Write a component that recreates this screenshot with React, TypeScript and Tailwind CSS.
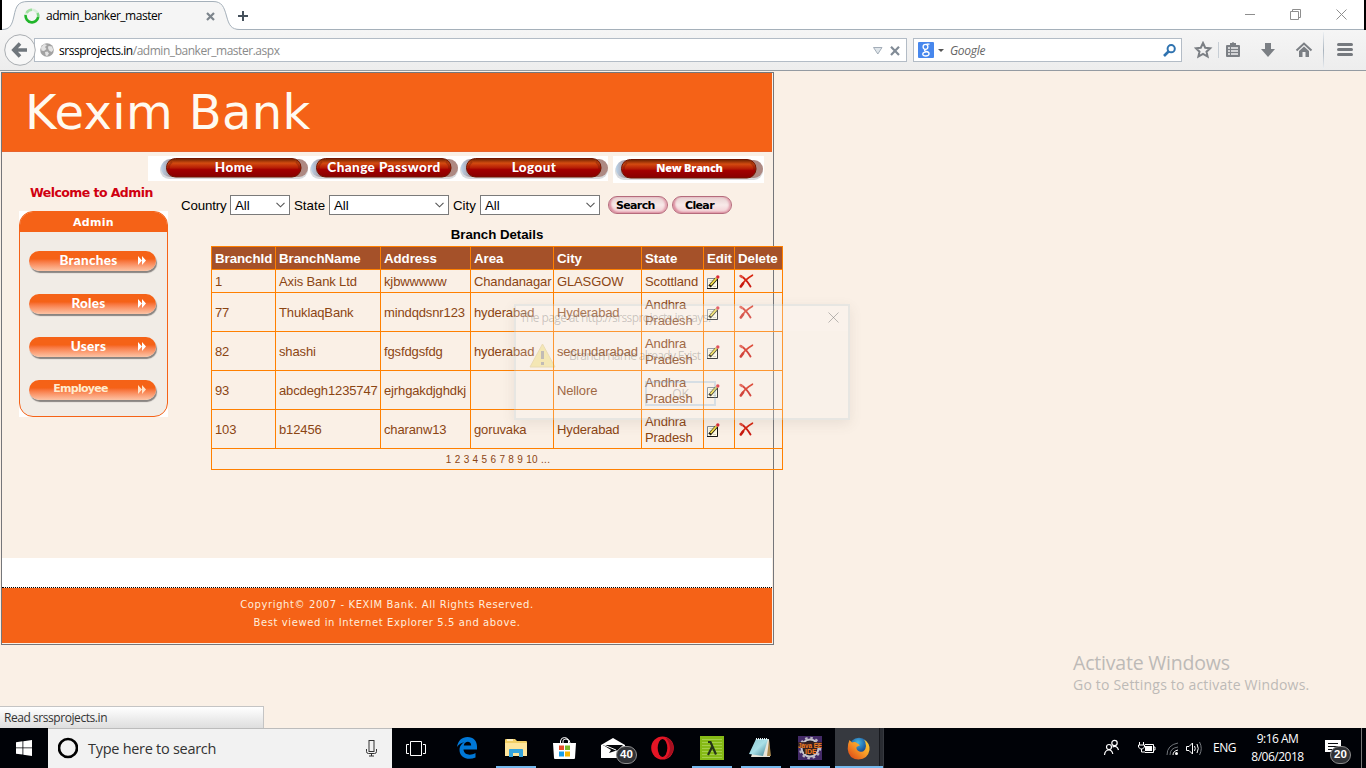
import React from "react";
import { FaEdge } from "react-icons/fa";

const NAV = ["Home", "Change Password", "Logout"];
const COLUMNS = ["BranchId", "BranchName", "Address", "Area", "City", "State", "Edit", "Delete"];
const ROWS = [
  ["1", "Axis Bank Ltd", "kjbwwwww", "Chandanagar", "GLASGOW", "Scottland"],
  ["77", "ThuklaqBank", "mindqdsnr123", "hyderabad", "Hyderabad", "Andhra Pradesh"],
  ["82", "shashi", "fgsfdgsfdg", "hyderabad", "secundarabad", "Andhra Pradesh"],
  ["93", "abcdegh1235747", "ejrhgakdjghdkj", "", "Nellore", "Andhra Pradesh"],
  ["103", "b12456", "charanw13", "goruvaka", "Hyderabad", "Andhra Pradesh"],
];
const UI = "font-['Open_Sans','Noto_Sans',sans-serif]";
const ARIAL = "font-['Liberation_Sans',Arial,sans-serif]";
const VERDANA = "font-['DejaVu_Sans',Verdana,sans-serif]";

function TabStrip() {
  return (
    <div className="relative flex h-[30px] bg-white">
      <div className="h-full w-[2px] bg-black" />
      <div className="flex h-full grow border-b border-[#a5b0ba]">
        <div className="relative flex h-[30px] w-[238px] items-center">
          <svg className="absolute top-0 left-0" width="238" height="30" viewBox="0 0 238 30">
            <path d="M0 29.5C8 29.5 10 25 12 16C14 6 16 1.500 26 1.500H211C220 1.500 222 7 224.500 16C227 25 229 29.500 238 29.500V30H0Z" fill="#f5f5f5" />
            <path d="M0 29.5C8 29.5 10 25 12 16C14 6 16 1.500 26 1.500H211C220 1.500 222 7 224.500 16C227 25 229 29.500 238 29.500" fill="none" stroke="#a5b0ba" />
          </svg>
          <svg className="relative ml-[22px] mt-[2px]" width="16" height="16" viewBox="0 0 16 16" fill="none" strokeWidth="2.600">
            <circle cx="8" cy="8" r="6.300" stroke="#d9efd9" />
            <path d="M1.700 7A6.300 6.300 0 0 0 14.200 9" stroke="#21b52a" />
            <path d="M2.600 4.800A6.300 6.300 0 0 1 8 1.700" stroke="#9fdf9f" />
            <path d="M14.200 9A6.300 6.300 0 0 0 13.500 5" stroke="#7fd684" />
          </svg>
          <span className="relative ml-[6px] mt-[2px] w-[150px] text-[12px] leading-4 tracking-[-0.480px] whitespace-nowrap text-black">admin_banker_master</span>
          <svg className="relative ml-[10px] mt-[2px]" width="9" height="9" viewBox="0 0 9 9" stroke="#7d858c" strokeWidth="2.200"><path d="M1 1L8 8M8 1L1 8" /></svg>
        </div>
        <svg className="-ml-[2px] mt-[11px]" width="10" height="10" viewBox="0 0 10 10" stroke="#46515c" strokeWidth="2"><path d="M5 0V10M0 5H10" /></svg>
        <div className="ml-auto flex items-start pr-[17px]">
          <svg className="mt-[9px]" width="102" height="11" viewBox="0 0 102 11" fill="none" stroke="#8e8e8e">
            <path d="M0 5.500H10M45.500 2.500H53.500V10.500H45.500ZM47.500 2.500V.500H55.500V8.500H53.500M91.500 .5L101.500 10.500M101.500 .5L91.500 10.500" />
          </svg>
        </div>
      </div>
      <div className="h-full w-[2px] bg-black" />
    </div>
  );
}

function Toolbar() {
  return (
    <div className="flex h-[41px] items-start border-b border-[#949ba2] bg-linear-to-b from-[#f5f5f5] to-[#ededed] pt-[8px]">
      <div className="relative ml-[34px] flex h-[24px] w-[873px] items-center border border-[#b3bcc6] bg-white">
        <svg className="absolute -top-[5px] -left-[31px]" width="32" height="32" viewBox="0 0 32 32">
          <circle cx="16" cy="16" r="15.300" fill="#f7f7f7" stroke="#a9adb1" />
          <path d="M10.500 16H23M16 9.500L9.800 16L16 22.500" fill="none" stroke="#6f767c" strokeWidth="3.600" />
        </svg>
        <svg className="ml-[5px]" width="14" height="14" viewBox="0 0 14 14">
          <circle cx="7" cy="7" r="6.800" fill="#a2a2a2" />
          <path d="M1 4.500L4 1L7 2L5 4L6.500 6L4 8L1.500 7.500ZM8.500 3L12 3.500L13.300 7L11.500 9L9 7.500L8 5ZM5 9L7.500 8.500L9 10.500L7 13.300L5.500 12Z" fill="#e3e3e3" />
        </svg>
        <span className="mt-[2px] ml-[5px] text-[12px] leading-4 tracking-[-0.460px] text-[#8a8a8a]"><span className="text-black">srssprojects.in</span>/admin_banker_master.aspx</span>
        <svg className="mt-px mr-[6px] ml-auto" width="27" height="10" viewBox="0 0 27 10">
          <path d="M.5 1.500H9L4.800 8Z" fill="#dfe5ea" stroke="#a3adb8" />
          <path d="M18 .8L26 9M26 .8L18 9" stroke="#818b96" strokeWidth="2.200" />
        </svg>
      </div>
      <div className="ml-[6px] flex h-[24px] w-[269px] items-center border border-[#b3bcc6] bg-white">
        <svg className="ml-[4px]" width="16" height="16" viewBox="0 0 16 16">
          <rect width="16" height="16" rx="1" fill="#4787ed" />
          <g fill="none" stroke="white" strokeWidth="1.300"><ellipse cx="7.500" cy="4.800" rx="2.400" ry="2.500" /><path d="M8.500 2.200H11.500M7.500 7.300C5.500 8.500 7 9 8.500 9.500C12.500 10.500 11.500 14 7.800 14C3.500 14 3.700 10 8.500 9.800" /></g>
        </svg>
        <svg className="ml-[4px]" width="6" height="3"><path d="M0 0H6L3 3Z" fill="#555" /></svg>
        <span className="mt-[2px] ml-[6px] text-[12px] leading-4 tracking-[-0.300px] text-[#666] italic">Google</span>
        <svg className="ml-auto mr-[5px]" width="13" height="13" viewBox="0 0 13 13" fill="none" stroke="#2f73b0"><circle cx="8.200" cy="4.700" r="3.600" strokeWidth="2" /><path d="M5.500 7.500L1 12" strokeWidth="2.600" /></svg>
      </div>
      <svg className="ml-[12px] mt-[3px]" width="172" height="18" viewBox="0 0 172 18">
        <path d="M9 2L11.200 6.700L16.200 7.200L12.500 10.700L13.600 15.600L9 13L4.400 15.600L5.500 10.700L1.800 7.200L6.800 6.700Z" fill="none" stroke="#7b7f84" strokeWidth="2" />
        <path d="M24.500 1V17" stroke="#c7ced5" />
        <path d="M32 5Q32 4 33 4H36V2H38Q39 0 40 2H42V4H45Q46 4 46 5V15Q46 16 45 16H33Q32 16 32 15Z" fill="#7b7f84" />
        <path d="M34 7H36M37 7H44M34 10H36M37 10H44M34 13H36M37 13H44" stroke="#f1f1f1" strokeWidth="1.500" />
        <path d="M71 2H77V8H81L74 16L67 8H71Z" fill="#7b7f84" />
        <path d="M102.500 9.500L110 2.500L117.500 9.500" stroke="#7b7f84" strokeWidth="2" fill="none" />
        <path d="M105 10L110 5.500L115 10V16H111.500V11H108.500V16H105Z" fill="#7b7f84" />
        <path d="M144.500 3.500H157.500M144.500 8.500H157.500M144.500 13.500H157.500" stroke="#75797e" strokeWidth="3" strokeLinecap="round" />
      </svg>
      <div className="-ml-[43px] -mt-[6px] h-[37px] w-px bg-linear-to-b from-[#edf0f3] via-[#a9b4be] to-[#edf0f3]" />
    </div>
  );
}

function NavButton({ label, id, narrow = false }: { label: string; id: string; narrow?: boolean }) {
  return (
    <div className="relative flex h-[25px] w-[150px] items-center justify-center">
      <svg className="absolute top-0 left-px" width="150" height="25" viewBox="0 0 150 25">
        <defs>
          <linearGradient id={`nav-${id}`} x1="0" y1="0" x2="0" y2="1">
            <stop offset="0" stopColor="#692000" /><stop offset=".25" stopColor="#d34b10" /><stop offset=".5" stopColor="#b61d05" /><stop offset=".6" stopColor="#a20000" /><stop offset="1" stopColor="#870000" />
          </linearGradient>
          <linearGradient id={`sh-${id}`} x1="0" y1="0" x2="1" y2="0">
            <stop offset="0" stopColor="#b9d3ea" /><stop offset=".06" stopColor="#a99aa0" /><stop offset="1" stopColor="#ae8982" />
          </linearGradient>
        </defs>
        <rect x="1" y="5" width="148" height="18" rx="9" fill="#d8dadd" />
        <rect x="2" y="3" width="147" height="18" rx="9" fill={`url(#sh-${id})`} />
        <rect x="7.500" y="2.500" width="134.500" height="18.500" rx="9" fill={`url(#nav-${id})`} stroke="#711500" />
        <path d="M13 6Q9 9 10 13M137 6Q141 9 140 13" fill="none" stroke="#5c1205" strokeOpacity=".3" strokeWidth="2" />
      </svg>
      <span className={narrow ? "relative mt-[-3px] ml-[3px] text-[11px] leading-4 font-extrabold tracking-[-0.250px] text-white font-['Open_Sans',sans-serif]" : "relative -mt-[3px] ml-[2px] text-[13.500px] leading-4 font-black tracking-[0.420px] text-white font-['Lato',sans-serif]"}>{label}</span>
    </div>
  );
}

function SideButton({ label, alt = false }: { label: string; alt?: boolean }) {
  return (
    <div className="relative flex h-[20px] w-[127px] items-center rounded-full bg-linear-to-b from-[#f56217] from-40% to-[#fbc3a5] shadow-[1px_2px_1px_#898481]">
      <span className={alt ? "w-[103px] text-center text-[11px] font-bold leading-4 text-[#ffecd0] tracking-[-0.750px] font-['DejaVu_Sans',sans-serif] -mt-[3px]" : "w-[119px] text-center text-[13.500px] font-black leading-4 text-white tracking-[0.300px] font-['Lato',sans-serif] -mt-[2px]"}>{label}</span>
      <svg className="absolute top-[5px] left-[109px]" width="8" height="9" viewBox="0 0 8 9" fill={alt ? "#ffe2c8" : "white"}><path d="M0 0L4 4.500L0 9ZM4 0L8 4.500L4 9Z" /></svg>
    </div>
  );
}

function Sidebar() {
  return (
    <aside className="w-[149px] bg-white">
      <div className="h-[206px] overflow-hidden rounded-[14px] border border-[#f56217] bg-[#f1ece6]">
        <div className={`${VERDANA} h-[20px] bg-[#f56217] text-center text-[11px] leading-[21px] font-bold tracking-[0.300px] text-white`}>Admin</div>
        <div className="flex flex-col gap-[23px] pt-[19px] pl-[9px]">
          <SideButton label="Branches" />
          <SideButton label="Roles" />
          <SideButton label="Users" />
          <SideButton label="Employee" alt />
        </div>
      </div>
    </aside>
  );
}

function Select({ wide = false }: { wide?: boolean }) {
  return (
    <div className={`${wide ? "w-[120px]" : "w-[60px]"} flex h-[20px] items-center justify-between border border-[#7a7a7a] bg-white pr-[4px] pl-[4px] text-[13.300px]`}>
      <span className="pt-px leading-4">All</span>
      <svg width="9" height="6" viewBox="0 0 9 6" fill="none" stroke="#555" strokeWidth="1.100"><path d="M.5 .8L4.500 4.800L8.500 .8" /></svg>
    </div>
  );
}

function PinkButton({ label, pad }: { label: string; pad: string }) {
  return (
    <div className={`flex h-[18px] w-[60px] items-center rounded-full border border-[#b56b7c] bg-linear-to-b from-[#e6d0d0] via-[#f8eae9] to-[#f2ccd2] shadow-[inset_2px_-1px_2px_#dc8fa0,inset_-2px_0_2px_#e3a4b1] ${pad} text-[11px] leading-4 font-bold text-black tracking-[-0.650px] font-['DejaVu_Sans',sans-serif]`}><span className="pt-px">{label}</span></div>
  );
}

function EditIcon() {
  return (
    <svg width="13" height="14" viewBox="0 0 13 14">
      <path d="M.5 3.500H10.500V13.500H.5Z" fill="#fffbe6" stroke="#7d8793" />
      <path d="M10.500 4V13.500H0" fill="none" stroke="#161616" />
      <path d="M2.500 5.500H6M2.500 7.500H5M6 11.500H9" stroke="#cfcab8" strokeWidth=".8" />
      <path d="M2.500 11.500L9.500 3.500" stroke="#1f1a0c" strokeWidth="3.200" />
      <path d="M3.600 10L9.600 3.100" stroke="#f4e04c" strokeWidth="1.900" />
      <circle cx="10.800" cy="2" r="1.700" fill="#dc2a35" />
    </svg>
  );
}

function DeleteIcon() {
  return (
    <svg width="15" height="14" viewBox="0 0 15 14" fill="none" strokeLinecap="round">
      <path d="M2 2Q7 5 11.500 12.500" stroke="#cb1b12" strokeWidth="1.900" />
      <path d="M1.800 12.500Q5 6 13.500 1.200" stroke="#d8260f" strokeWidth="1.600" />
      <path d="M1.800 12.500L4 9.500" stroke="#c8190f" strokeWidth="2.600" />
      <path d="M1.500 2L3 3" stroke="#e34c39" strokeWidth="2.400" />
    </svg>
  );
}

function BranchTable() {
  return (
    <div className="w-[572px]">
      <div className="h-[20px] text-center text-[13.300px] leading-[17px] font-bold tracking-[-0.040px] text-black">Branch Details</div>
      <div className="grid grid-cols-[64px_105px_90px_83px_88px_62px_31px_48px] border-t border-l border-[#ff8000] leading-4 text-[#8b4513]">
        {COLUMNS.map((c) => (
          <div key={c} className="flex h-[23px] items-center border-r border-b border-[#ff8000] bg-[#a55129] pt-px pl-[3px] text-[13.300px] font-bold tracking-[-0.050px] whitespace-nowrap text-white">{c}</div>
        ))}
        {ROWS.map((row, i) => (
          <React.Fragment key={row[0]}>
            {row.map((v, j) => (
              <div key={j} className={`${i === 0 ? "h-[23px]" : "h-[39px]"} flex items-center border-r border-b border-[#ff8000] pt-[2px] pl-[3px] text-[13px] tracking-[-0.130px]`}>{v}</div>
            ))}
            <div className="flex items-center border-r border-b border-[#ff8000] pt-px pl-[3px]"><EditIcon /></div>
            <div className="flex items-center border-r border-b border-[#ff8000] pl-[4px] pb-px"><DeleteIcon /></div>
          </React.Fragment>
        ))}
        <div className="col-span-8 h-[21px] border-r border-b border-[#ff8000] pl-[2px] text-center text-[10px] leading-[21px] tracking-[0.300px]">1 2 3 4 5 6 7 8 9 10 ...</div>
      </div>
    </div>
  );
}

function AlertDialog() {
  return (
    <div className={`${UI} absolute top-[233px] left-[514px] h-[116px] w-[336px] border-2 border-[#7fa9bb]/15 bg-[#f5f3f5]/20 text-[12px] leading-4 text-[#555]/30 shadow-[0_4px_12px_rgba(90,80,70,0.10)]`}>
      <div className="flex h-[25px] items-center justify-between bg-white/10 pr-[9px] pl-[4px]">
        <span className="-mt-[2px] tracking-[-0.600px]">The page at http://srssprojects.in says:</span>
        <svg className="-mt-[3px]" width="11" height="11" viewBox="0 0 11 11" stroke="#777" strokeOpacity=".5"><path d="M.5 .5L10.500 10.500M10.500 .5L.5 10.500" /></svg>
      </div>
      <div className="flex items-center pt-[11px] pl-[13px]">
        <svg width="27" height="27" viewBox="0 0 27 27" opacity=".28"><path d="M13.500 2L26 25H1Z" fill="#ead02d" stroke="#c6a52d" strokeLinejoin="round" /><path d="M13.500 9V17M13.500 20V23" stroke="#333" strokeWidth="3" /></svg>
        <span className="ml-[13px] mt-px tracking-[-0.680px]">Branch name already Exist</span>
      </div>
      <div className="mt-[12px] ml-[129px] flex h-[25px] w-[71px] items-center justify-center border-2 border-[#70a7d8]/25">OK</div>
    </div>
  );
}

function Site() {
  return (
    <div className={`${ARIAL} mt-[1px] ml-[1px] flex h-[573px] w-[773px] flex-col border border-[#75767a] pr-px pb-px`}>
      <header className="h-[79px] border-b border-[#e8632d] bg-[#f56217] pt-[11px] pl-[23px]">
        <h1 className={`${VERDANA} text-[48px] leading-[56px] tracking-[0.350px] whitespace-nowrap text-[#fffaf0]`}>Kexim Bank</h1>
      </header>
      <div className="flex h-[406px]">
        <div className="w-[146px] pt-[33px] pl-[17px]">
          <div className={`${VERDANA} -mr-2 ml-[11px] h-[26px] text-[12.500px] leading-4 font-bold tracking-[-0.560px] whitespace-nowrap text-[#d00010]`}>Welcome to Admin</div>
          <Sidebar />
        </div>
        <div className="flex w-[620px] flex-col pt-[4px]">
          <div className="flex h-[27px] items-start">
            <div className="flex h-[25px] w-[460px] bg-white pl-[10px]">
              {NAV.map((n) => <NavButton key={n} label={n} id={n[0]} />)}
            </div>
            <div className="ml-[5px] flex h-[27px] w-[151px] bg-white pt-[1px]"><NavButton label="New Branch" id="N" narrow /></div>
          </div>
          <div className="mt-[12px] flex h-[20px] items-center pl-[33px] text-[13.300px] leading-4 text-black">
            <span className="w-[49px] pt-px tracking-[-0.150px]">Country</span><Select />
            <span className="w-[39px] pt-px pl-[4px]">State</span><Select wide />
            <span className="w-[31px] pt-px pl-[4px]">City</span><Select wide />
            <span className="w-[8px]" />
            <PinkButton label="Search" pad="pl-[7px]" /><span className="w-[4px]" /><PinkButton label="Clear" pad="pl-[12px]" />
          </div>
          <div className="mt-[11px] pl-[63px]"><BranchTable /></div>
        </div>
      </div>
      <div className="h-[29px] bg-white" />
      <footer className={`${VERDANA} flex grow flex-col items-center border-t border-dotted border-black bg-[#f56217] bg-clip-padding pt-[8px] text-[10px] leading-[18px] tracking-[0.600px] text-[#ffeedd]`}>
        <p>Copyright© 2007 - KEXIM Bank. All Rights Reserved.</p>
        <p>Best viewed in Internet Explorer 5.5 and above.</p>
      </footer>
    </div>
  );
}

function Badge({ children }: { children: React.ReactNode }) {
  return <span className={`${ARIAL} absolute flex h-[18px] w-[21px] items-center justify-center rounded-full border border-[#8d8d8d] bg-[#303236] text-[11.500px] leading-none font-bold text-white`}>{children}</span>;
}

function TaskItem({ children, running = false, active = false }: { children: React.ReactNode; running?: boolean; active?: boolean }) {
  return (
    <div className={`relative flex h-full w-[49px] items-center justify-center ${active ? "bg-[#36393f]" : ""}`}>
      {children}
      {running && <div className={`absolute bottom-0 h-[2px] bg-[#76b9ed] ${active ? "left-0 w-[48px]" : "left-[4px] w-[40px]"}`} />}
    </div>
  );
}

function Taskbar() {
  return (
    <div className={`${UI} flex h-[40px] bg-[#000207] text-white`}>
      <div className="flex w-[48px] items-center justify-center">
        <svg width="16" height="16" viewBox="0 0 16 16" fill="white"><path d="M0 2.200L6.500 1.300V7.500H0ZM7.300 1.200L16 0V7.500H7.300ZM0 8.300H6.500V14.500L0 13.700ZM7.300 8.300H16V16L7.300 14.700Z" /></svg>
      </div>
      <div className="flex w-[344px] items-center border-t border-[#bcbcbc] bg-[#f2f2f2] pl-[10px]">
        <svg className="-mt-px" width="20" height="22" viewBox="0 0 20 22"><circle cx="10" cy="11" r="9" fill="none" stroke="#000" strokeWidth="2.700" /></svg>
        <span className="ml-[10px] text-[14.500px] leading-5 tracking-[-0.280px] text-[#333]">Type here to search</span>
        <svg className="mr-[15px] ml-auto" width="11" height="17" viewBox="0 0 11 17" fill="none" stroke="#333"><rect x="3" y=".5" width="5" height="11" /><path d="M.5 9V11.500Q.5 13.500 2.500 13.500H8.500Q10.500 13.500 10.500 11.500V9M5.500 13.500V16M3 16H8" /></svg>
      </div>
      <div className="flex w-[51px] items-center pl-[14px]">
        <svg width="20" height="15" viewBox="0 0 20 15" fill="none" stroke="white"><path d="M4.500 .5H15.500V14.500H4.500ZM3 3.500H.5V12.500H3M17 3.500H19.500V12.500H17" /></svg>
      </div>
      <TaskItem>
        <svg className="-ml-px" width="20" height="22" viewBox="0 0 20 22"><path d="M0 10C1 3.500 5 0 10.500 0C16.500 0 20 4 20 9.500V12.500H6.500C7 18 13.500 19 18.500 16V20.500C11 24 2.500 20.500 2.500 13C2.500 9 5 6 8 5C4.500 5.500 1.500 7.500 0 10ZM6.800 8.500H14.200C14.200 3.500 7.500 3.800 6.800 8.500Z" fill="#0078d7" /></svg>
      </TaskItem>
      <TaskItem running>
        <svg className="-ml-[2px]" width="22" height="20" viewBox="0 0 22 20"><path d="M0 2Q0 1 1 1H10L12 3H21Q22 3 22 4V18H0Z" fill="#f2cf66" /><path d="M0 5H22V18H0Z" fill="#ffe69c" /><path d="M2 2H8" stroke="#fff7da" strokeWidth="1.500" /><path d="M4 19V11.500Q4 11 5 11H17Q18 11 18 11.500V19H14V15H8V19Z" fill="#35a4dc" /></svg>
      </TaskItem>
      <TaskItem>
        <svg className="-mt-[1px] -ml-[2px]" width="23" height="24" viewBox="0 0 23 24"><path d="M0 7H23L22 22Q22 23 21 23H2Q1 23 1 22Z" fill="white" /><path d="M7.500 7V5Q8 1.500 11.500 1.500Q15 1.500 15.500 5V7M10 7V5Q10 3 13 3Q17 3 17 7" fill="none" stroke="white" /><path d="M6 9.500H11V14H6Z" fill="#e74c29" /><path d="M12 9.500H17V14H12Z" fill="#7bb829" /><path d="M6 15.500H11V20.500H6Z" fill="#1a9ee8" /><path d="M12 15.500H17V20.500H12Z" fill="#f8b500" /></svg>
      </TaskItem>
      <TaskItem>
        <svg className="-ml-[3px]" width="24" height="20" viewBox="0 0 24 20"><path d="M0 7L12 0L24 7V20H0Z" fill="white" /><path d="M2 7H22L17 12L8 15L10 12Z" fill="#05070b" /><path d="M3 7L15 12" stroke="white" /></svg>
        <div className="absolute top-[18px] left-[26px]"><Badge>40</Badge></div>
      </TaskItem>
      <TaskItem>
        <svg className="-ml-[2px]" width="23" height="24" viewBox="0 0 23 24"><ellipse cx="11.500" cy="12" rx="11.300" ry="11.500" fill="#e51525" /><path d="M14 1Q22.500 4 22.500 12Q22 20 14 23Q19 18 19 12Q18 5 14 1Z" fill="#a61020" /><ellipse cx="11.500" cy="12" rx="4.800" ry="9" fill="#020306" /></svg>
      </TaskItem>
      <TaskItem running>
        <svg className="-ml-px" width="24" height="24" viewBox="0 0 24 24"><rect width="24" height="24" fill="#86ba16" /><path d="M2 3.500H22M2 6.500H22M2 9.500H22M2 12.500H22M2 15.500H22M2 18.500H22M2 21.500H22" stroke="#a4cf49" /><path d="M8 6H10.500L16 18.500M12 11L8 19" stroke="#26341a" strokeWidth="2.200" fill="none" /></svg>
      </TaskItem>
      <TaskItem running>
        <svg className="-ml-[3px]" width="24" height="22" viewBox="0 0 24 22"><defs><linearGradient id="note" x1="0" x2="1" y2="1"><stop stopColor="#8fc9d3" /><stop offset=".5" stopColor="#a9e0e8" /><stop offset="1" stopColor="#407e90" /></linearGradient></defs><path d="M9 2H21L22 20H3Z" fill="#e9e5da" /><path d="M21 3L23 19H19Z" fill="#a9894f" /><path d="M8 2H20L15 19L1 17Z" fill="url(#note)" /><path d="M8 2H20" stroke="#e7eef0" strokeWidth="2" strokeDasharray="1 1" /></svg>
      </TaskItem>
      <TaskItem running>
        <svg className="-ml-[2px]" width="24" height="24" viewBox="0 0 24 24"><rect width="24" height="24" fill="#432a67" /><circle cx="12" cy="12" r="8.500" fill="#1e1a28" stroke="#c8c6cd" strokeWidth="2" /><circle cx="12" cy="12" r="10" fill="none" stroke="#bbb7c4" strokeWidth="2.500" strokeDasharray="2.500 2.736" /><path d="M0 6H24V12H18V18H6V12H0Z" fill="#38201f" fillOpacity=".85" /><text x="0" y="11.500" fontFamily="Liberation Sans" fontWeight="bold" fontSize="7" fill="#f47e23" textLength="24" lengthAdjust="spacingAndGlyphs">Java EE</text><text x="7" y="17.500" fontFamily="Liberation Sans" fontWeight="bold" fontSize="7" fill="#f47e23">IDE</text></svg>
      </TaskItem>
      <TaskItem running active>
        <svg className="-ml-[2px]" width="23" height="23" viewBox="0 0 23 23"><defs><radialGradient id="globe" cx=".45" cy=".25"><stop stopColor="#47b7e4" /><stop offset="1" stopColor="#154b94" /></radialGradient><linearGradient id="fox" x1="1" x2="0" y2="1"><stop stopColor="#ffd936" /><stop offset=".5" stopColor="#f59527" /><stop offset="1" stopColor="#d93a13" /></linearGradient></defs><circle cx="12" cy="10.500" r="9.800" fill="url(#globe)" /><path d="M2.500 3L5 5.500Q8 4.500 10 6L13 8.200L9.500 10Q9 13 12.500 14.500Q18 16 19 9Q19 5 17 2.500Q23 6 22.500 13Q21 22 11.500 22.500Q1.500 22 .7 12Q.5 7 2.500 3Z" fill="url(#fox)" /></svg>
        <div className="absolute top-0 right-px h-full w-[4px] border-l border-[#17191e] bg-[#292c32]" />
      </TaskItem>
      <div className="ml-auto flex h-full items-center">
        <svg width="100" height="20" viewBox="0 0 100 20" fill="none" stroke="white">
          <circle cx="6" cy="9" r="2.500" strokeWidth="1.200" /><path d="M1.500 17Q2 12 6 12Q9 12 9.800 16" strokeWidth="1.200" /><circle cx="11.500" cy="5" r="2.700" strokeWidth="1.200" /><path d="M9.500 9Q14 7 15.500 12" strokeWidth="1.200" />
          <path d="M36.500 4V7M40.500 4V7M35.500 7H41.500V9L39.500 11H37.500L35.500 9ZM38.500 11V14H42M42 6.500H50.500V14.500H42M50.500 9H52V12H50.500" /><path d="M42 8H49V13H42Z" fill="white" stroke="none" />
          <path d="M64 17Q64 7 75 5M67 17Q67 10 75 9" stroke="#71757a" /><path d="M70 17Q70 13 75 12" /><circle cx="73.500" cy="15.500" r="1.500" fill="white" stroke="none" />
          <path d="M83.500 8.500H86L89.500 5V16L86 12.500H83.500Z" /><path d="M91.500 8Q93 10.500 91.500 13M94 6Q96.500 10.500 94 15" /><path d="M96.500 4Q100 10.500 96.500 17" stroke="#74787d" />
        </svg>
        <span className="ml-[10px] w-[24px] text-[12px] leading-4 tracking-[-0.500px]">ENG</span>
        <div className="ml-[12px] w-[57px] text-center text-[12px] leading-[18px] tracking-[-0.500px] whitespace-nowrap"><div>9:16 AM</div><div>8/06/2018</div></div>
        <div className="relative ml-[19px] h-[40px] w-[36px]">
          <svg className="absolute top-[12px] left-0" width="16" height="15" viewBox="0 0 16 15"><path d="M0 0H16V12H9L6 15V12H0Z" fill="white" /><path d="M3 3.500H13M3 6.500H13M3 9.500H10" stroke="#090b0f" /></svg>
          <div className="absolute top-[18px] left-[5px]"><Badge>20</Badge></div>
        </div>
        <div className="mr-[4px] h-full w-px bg-[#777]" />
      </div>
    </div>
  );
}

export default function App() {
  return (
    <div className={`${UI} flex h-[768px] w-[1366px] flex-col overflow-hidden bg-[#faf0e6]`}>
      <TabStrip />
      <Toolbar />
      <main className="relative h-[657px] overflow-hidden bg-[#faf0e6]">
        <Site />
        <AlertDialog />
        <div className="absolute top-[581px] left-[1073px] whitespace-nowrap text-[#bdbab7]">
          <div className="text-[19.500px] leading-[22px] tracking-[-0.200px]">Activate Windows</div>
          <div className="text-[14px] leading-[22px] tracking-[0.200px]">Go to Settings to activate Windows.</div>
        </div>
        <div className="absolute bottom-0 left-0 h-[22px] w-[264px] border-t border-r border-[#c4c4c4] bg-linear-to-b from-white to-[#dedede] pl-[4px] text-[12px] leading-[22px] tracking-[-0.440px] text-[#333]">Read srssprojects.in</div>
      </main>
      <Taskbar />
    </div>
  );
}
